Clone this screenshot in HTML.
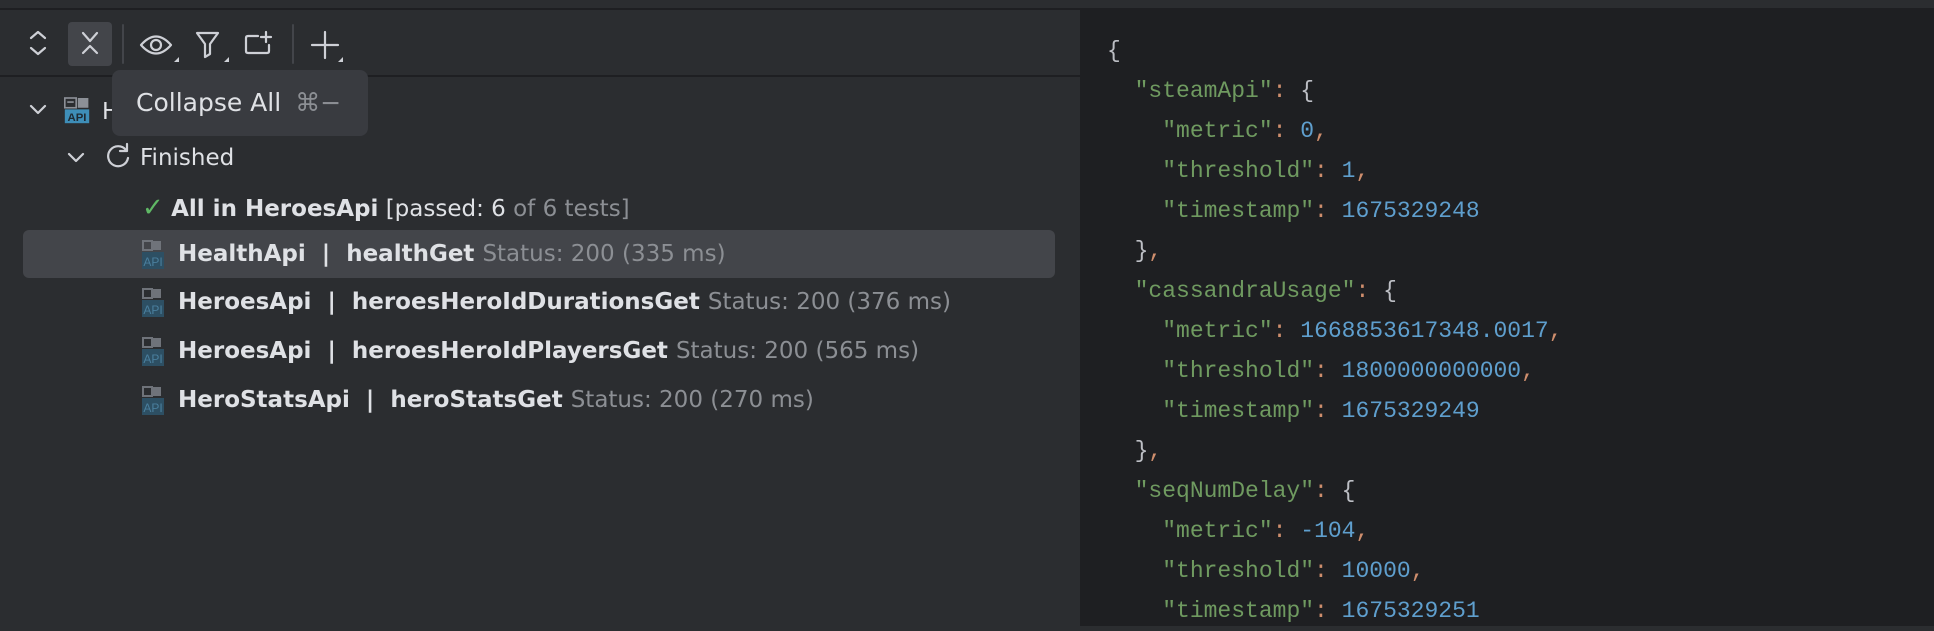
<!DOCTYPE html>
<html><head><meta charset="utf-8"><style>
*{margin:0;padding:0;box-sizing:border-box}
body{width:1934px;height:626px;background:#2b2d30;position:relative;overflow:hidden;font-family:"DejaVu Sans","Liberation Sans",sans-serif}
.top{position:absolute;left:0;top:0;width:1934px;height:10px;background:#2b2d30;border-bottom:2px solid #1e1f22}
.tb{position:absolute;left:0;top:75px;width:1080px;height:2px;background:#1e1f22}
.right{position:absolute;left:1080px;top:10px;width:854px;height:616px;background:#1e1f22}
.ic{position:absolute}
.row{position:absolute;left:0;height:48px;line-height:48px;font-size:23px;color:#dfe1e5;white-space:nowrap}
.b{font-weight:bold}
.g{color:#8c8f94}
.api{position:absolute;width:26px;height:30px}
.tip{position:absolute;left:112px;top:70px;width:256px;height:66px;background:#393b40;border-radius:8px;color:#dfe1e5;font-size:25px;line-height:66px;padding-left:24px;white-space:nowrap}
.tip span{color:#8c8f94;margin-left:14px}
pre{position:absolute;left:1107px;top:31px;font-family:"Liberation Mono",monospace;font-size:23px;line-height:40px;color:#bcbec4}
.k{color:#6f9a60}.n{color:#5f9fce}.p{color:#cf8e6d}
</style></head><body>
<div class="top"></div>
<div class="tb"></div>
<div class="right"></div>
<svg class="ic" style="left:0;top:0" width="400" height="200" viewBox="0 0 400 200" fill="none" stroke="#ced0d6" stroke-width="2.2" stroke-linecap="round" stroke-linejoin="round">
<path d="M31 38l7-6 7 6M31 48l7 6 7-6"/>
<rect x="68" y="22" width="44" height="44" rx="4" fill="#43454a" stroke="none"/>
<path d="M83 33l7 8 7-8M83 53l7-7 7 7"/>
<line x1="123" y1="25" x2="123" y2="63" stroke="#43454a" stroke-width="2"/>
<path d="M141 45q15-17 30 0q-15 17-30 0z"/><circle cx="156" cy="45" r="5"/>
<path d="M197 33h21l-8 11v10l-5 3v-13z"/>
<path d="M258 36h-10q-2 0-2 2v13q0 2 2 2h19q2 0 2-2v-6M266 32v10M261 37h10"/>
<line x1="293" y1="25" x2="293" y2="63" stroke="#43454a" stroke-width="2"/>
<path d="M312 45h26M325 32v26"/>
<g fill="#ced0d6" stroke="none"><path d="M174 62l5-5v5z"/><path d="M224 62l5-5v5z"/><path d="M338 62l5-5v5z"/></g>
<path d="M31 106l7 7 7-7M69 154l7 7 7-7"/>
<path d="M126 150a10 10 0 1 0 2 8M127 144v7h-7"/>
</svg>
<svg class="api" style="left:64px;top:96px" width="32" height="34" viewBox="0 0 32 34"><rect x="1" y="1" width="14" height="12" fill="none" stroke="#8c9097" stroke-width="2"/><rect x="4" y="5" width="8" height="2" fill="#8c9097"/><rect x="17" y="1" width="13" height="12" fill="#8c9097"/><rect x="1" y="15" width="30" height="17" fill="#3e8eb8"/><text x="16" y="29" font-family="Liberation Sans" font-weight="bold" font-size="14" fill="#1e2a33" text-anchor="middle">API</text></svg>
<div class="row" style="left:102px;top:88px">H</div>
<div class="row" style="left:140px;top:134px">Finished</div>
<div class="row" style="left:142px;top:184px"><span style="color:#5fb865;font-weight:bold;font-size:26px">✓</span> <span class="b">All in HeroesApi</span> [passed: 6 <span class="g">of 6 tests]</span></div>
<div style="position:absolute;left:23px;top:230px;width:1032px;height:48px;background:#43454a;border-radius:6px"></div>
<svg class="ic" style="left:142px;top:240px" width="22" height="30" viewBox="0 0 22 30"><rect x="1" y="1" width="9" height="9" fill="none" stroke="#6f737a" stroke-width="2"/><rect x="11" y="1" width="8" height="9" fill="#6f737a"/><rect x="0" y="12" width="22" height="17" fill="#2d4f63"/><text x="11" y="26" font-family="Liberation Sans" font-size="12" fill="#4a7f9e" text-anchor="middle">API</text></svg>
<div class="row b" style="left:178px;top:230px">HealthApi &nbsp;| &nbsp;healthGet <span class="g" style="font-weight:normal">Status: 200 (335 ms)</span></div>
<svg class="ic" style="left:142px;top:288px" width="22" height="30" viewBox="0 0 22 30"><rect x="1" y="1" width="9" height="9" fill="none" stroke="#6f737a" stroke-width="2"/><rect x="11" y="1" width="8" height="9" fill="#6f737a"/><rect x="0" y="12" width="22" height="17" fill="#2d4f63"/><text x="11" y="26" font-family="Liberation Sans" font-size="12" fill="#4a7f9e" text-anchor="middle">API</text></svg>
<div class="row b" style="left:178px;top:278px">HeroesApi &nbsp;| &nbsp;heroesHeroIdDurationsGet <span class="g" style="font-weight:normal">Status: 200 (376 ms)</span></div>
<svg class="ic" style="left:142px;top:337px" width="22" height="30" viewBox="0 0 22 30"><rect x="1" y="1" width="9" height="9" fill="none" stroke="#6f737a" stroke-width="2"/><rect x="11" y="1" width="8" height="9" fill="#6f737a"/><rect x="0" y="12" width="22" height="17" fill="#2d4f63"/><text x="11" y="26" font-family="Liberation Sans" font-size="12" fill="#4a7f9e" text-anchor="middle">API</text></svg>
<div class="row b" style="left:178px;top:327px">HeroesApi &nbsp;| &nbsp;heroesHeroIdPlayersGet <span class="g" style="font-weight:normal">Status: 200 (565 ms)</span></div>
<svg class="ic" style="left:142px;top:386px" width="22" height="30" viewBox="0 0 22 30"><rect x="1" y="1" width="9" height="9" fill="none" stroke="#6f737a" stroke-width="2"/><rect x="11" y="1" width="8" height="9" fill="#6f737a"/><rect x="0" y="12" width="22" height="17" fill="#2d4f63"/><text x="11" y="26" font-family="Liberation Sans" font-size="12" fill="#4a7f9e" text-anchor="middle">API</text></svg>
<div class="row b" style="left:178px;top:376px">HeroStatsApi &nbsp;| &nbsp;heroStatsGet <span class="g" style="font-weight:normal">Status: 200 (270 ms)</span></div>
<div class="tip">Collapse All<span>⌘−</span></div>
<pre>{
  <span class="k">"steamApi"</span><span class="p">:</span> {
    <span class="k">"metric"</span><span class="p">:</span> <span class="n">0</span><span class="p">,</span>
    <span class="k">"threshold"</span><span class="p">:</span> <span class="n">1</span><span class="p">,</span>
    <span class="k">"timestamp"</span><span class="p">:</span> <span class="n">1675329248</span>
  }<span class="p">,</span>
  <span class="k">"cassandraUsage"</span><span class="p">:</span> {
    <span class="k">"metric"</span><span class="p">:</span> <span class="n">1668853617348.0017</span><span class="p">,</span>
    <span class="k">"threshold"</span><span class="p">:</span> <span class="n">1800000000000</span><span class="p">,</span>
    <span class="k">"timestamp"</span><span class="p">:</span> <span class="n">1675329249</span>
  }<span class="p">,</span>
  <span class="k">"seqNumDelay"</span><span class="p">:</span> {
    <span class="k">"metric"</span><span class="p">:</span> <span class="n">-104</span><span class="p">,</span>
    <span class="k">"threshold"</span><span class="p">:</span> <span class="n">10000</span><span class="p">,</span>
    <span class="k">"timestamp"</span><span class="p">:</span> <span class="n">1675329251</span>
</pre>
</body></html>
